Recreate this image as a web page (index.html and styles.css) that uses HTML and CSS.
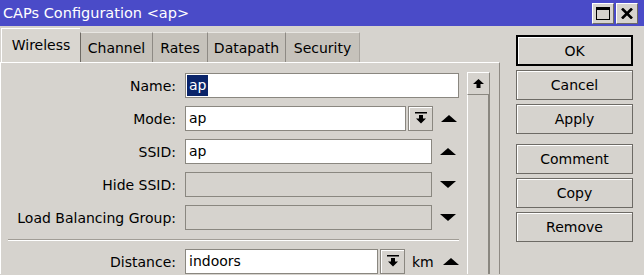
FILE: index.html
```html
<!DOCTYPE html>
<html lang="en">
<head>
    <meta charset="UTF-8">
    <title>CAPs Configuration</title>
    <link rel="stylesheet" href="styles.css">
</head>
<body>
    <div class="window">
        <div class="titlebar">
            <span class="title">CAPs Configuration &lt;ap&gt;</span>
            <div class="win-btns">
                <button class="win-btn">
                    <svg width="14" height="13" viewBox="0 0 14 13"><rect x="0.5" y="0.5" width="13" height="12" fill="none" stroke="#000"/><rect x="0" y="0" width="14" height="3" fill="#000"/></svg>
                </button>
                <button class="win-btn">
                    <svg width="12" height="11" viewBox="0 0 12 11"><path d="M1 0.5 L11 10.5 M11 0.5 L1 10.5" stroke="#000" stroke-width="2.6"/></svg>
                </button>
            </div>
        </div>
        <div class="body">
            <div class="main">
                <div class="tabs">
                    <div class="tab active">Wireless</div>
                    <div class="tab t-channel">Channel</div>
                    <div class="tab t-rates">Rates</div>
                    <div class="tab t-datapath">Datapath</div>
                    <div class="tab t-security">Security</div>
                </div>
                <div class="panel">
                    <div class="form">
                        <div class="row">
                            <label class="label">Name:</label>
                            <div class="field w-name"><span class="sel">ap</span></div>
                        </div>
                        <div class="row">
                            <label class="label">Mode:</label>
                            <div class="field w-mode">ap</div>
                            <span class="drop"><svg width="12" height="13" viewBox="0 0 12 13"><rect x="0" y="0" width="12" height="1.5" fill="#000"/><path d="M4 3 H8 V6.5 H11 L6 11.5 L1 6.5 H4 Z" fill="#000"/></svg></span>
                            <span class="arrow up"></span>
                        </div>
                        <div class="row">
                            <label class="label">SSID:</label>
                            <div class="field w-ssid">ap</div>
                            <span class="arrow up"></span>
                        </div>
                        <div class="row">
                            <label class="label">Hide SSID:</label>
                            <div class="field w-ssid off"></div>
                            <span class="arrow down"></span>
                        </div>
                        <div class="row">
                            <label class="label">Load Balancing Group:</label>
                            <div class="field w-ssid off"></div>
                            <span class="arrow down"></span>
                        </div>
                        <div class="sep"></div>
                        <div class="row">
                            <label class="label">Distance:</label>
                            <div class="field w-dist">indoors</div>
                            <span class="drop"><svg width="12" height="13" viewBox="0 0 12 13"><rect x="0" y="0" width="12" height="1.5" fill="#000"/><path d="M4 3 H8 V6.5 H11 L6 11.5 L1 6.5 H4 Z" fill="#000"/></svg></span>
                            <span class="unit">km</span>
                            <span class="arrow up"></span>
                        </div>
                    </div>
                    <div class="scrollbar">
                        <div class="scroll-up">
                            <svg width="11" height="9" viewBox="0 0 11 9"><path d="M5.5 0 L11 5 H7.5 V9 H3.5 V5 H0 Z" fill="#000"/></svg>
                        </div>
                        <div class="scroll-track"></div>
                    </div>
                </div>
            </div>
            <div class="actions">
                <button class="btn default">OK</button>
                <button class="btn">Cancel</button>
                <button class="btn">Apply</button>
                <button class="btn gap">Comment</button>
                <button class="btn">Copy</button>
                <button class="btn">Remove</button>
            </div>
        </div>
    </div>
</body>
</html>
```

FILE: styles.css
```css
body {
    margin: 0;
    padding: 0;
    font-family: "DejaVu Sans", sans-serif;
    font-size: 14px;
    color: #000;
    background-color: #d6d3ce;
}
.window {
    width: 644px;
    height: 275px;
    overflow: hidden;
    background-color: #d6d3ce;
}
.titlebar {
    height: 26px;
    background-color: #4a4bc8;
    display: flex;
    align-items: center;
    justify-content: space-between;
    padding: 0 6px 0 3px;
}
.title {
    color: #fff;
    font-size: 14.5px;
}
.win-btns {
    display: flex;
    gap: 2px;
}
.win-btn {
    width: 22px;
    height: 21px;
    padding: 0;
    background: #d6d3ce;
    border: 1px solid;
    border-color: #fff #6d6a65 #6d6a65 #fff;
    display: flex;
    align-items: center;
    justify-content: center;
}
.body {
    display: flex;
}
.main {
    width: 500px;
}
.tabs {
    display: flex;
    align-items: flex-end;
    height: 36px;
    padding-left: 1px;
}
.tab {
    height: 30px;
    line-height: 30px;
    text-align: center;
    background-color: #c6c2bb;
    border-top: 1px solid #e8e6e2;
    border-left: 1px solid #8e8a84;
    box-sizing: border-box;
    white-space: nowrap;
}
.t-channel { width: 72px; border-left-color: #6e6a64; }
.t-rates { width: 55px; }
.t-datapath { width: 78px; }
.t-security { width: 75px; border-right: 1px solid #a9a59f; }
.tab.active {
    width: 79px;
    height: 34px;
    line-height: 32px;
    background-color: #d9d6d0;
    border-top: 1px solid #fff;
    border-left: 1px solid #fff;
}
.panel {
    display: flex;
    height: 212px;
    border-top: 1px solid #fff;
    border-left: 1px solid #fff;
    border-right: 1px solid #8e8a84;
    box-sizing: border-box;
}
.form {
    width: 458px;
    padding-top: 10px;
    display: flex;
    flex-direction: column;
    gap: 8px;
}
.row {
    display: flex;
    align-items: center;
    height: 25px;
}
.label {
    width: 175px;
    text-align: right;
    margin-right: 9px;
    flex-shrink: 0;
}
.field {
    height: 25px;
    box-sizing: border-box;
    border: 1px solid #8a8780;
    background-color: #fff;
    padding: 0 3px;
    line-height: 23px;
    flex-shrink: 0;
}
.field.off {
    background-color: #d6d3ce;
}
.w-name { width: 274px; padding-left: 1px; }
.w-mode { width: 221px; }
.w-ssid { width: 247px; }
.w-dist { width: 193px; }
.sel {
    display: inline-block;
    height: 21px;
    line-height: 21px;
    margin-top: 1px;
    vertical-align: top;
    background-color: #0a246a;
    color: #fff;
    padding: 0 2px;
}
.drop {
    width: 25px;
    height: 25px;
    box-sizing: border-box;
    margin-left: 2px;
    border: 1px solid #8a8780;
    box-shadow: inset 1px 1px #fff;
    display: flex;
    align-items: center;
    justify-content: center;
}
.unit {
    margin-left: 7px;
    width: 23px;
}
.arrow {
    width: 0;
    height: 0;
    margin-left: 8px;
    border-left: 8px solid transparent;
    border-right: 8px solid transparent;
}
.arrow.up {
    border-bottom: 7px solid #000;
}
.arrow.down {
    border-top: 7px solid #000;
}
.sep {
    margin: 1px 0 0 7px;
    width: 451px;
    height: 1px;
    background-color: #a19d96;
    border-bottom: 1px solid #fff;
}
.scrollbar {
    margin-top: 9px;
    margin-left: 8px;
    width: 23px;
    display: flex;
    flex-direction: column;
}
.scroll-up {
    height: 23px;
    box-sizing: border-box;
    border: 1px solid;
    border-color: #fff #8a8780 #8a8780 #fff;
    display: flex;
    align-items: center;
    justify-content: center;
}
.scroll-track {
    flex: 1;
    border-left: 1px solid #fff;
    border-right: 2px solid #8a8780;
}
.actions {
    margin: 9px 0 0 16px;
    width: 117px;
    display: flex;
    flex-direction: column;
    gap: 4px;
}
.btn {
    height: 30px;
    padding: 0;
    font-family: "DejaVu Sans", sans-serif;
    font-size: 14px;
    color: #000;
    background-color: #d6d3ce;
    border: 1px solid #6d6a65;
    box-shadow: inset 1px 1px #fff;
}
.btn.default {
    height: 31px;
    border: 2px solid #000;
}
.btn.gap {
    margin-top: 6px;
}
```
